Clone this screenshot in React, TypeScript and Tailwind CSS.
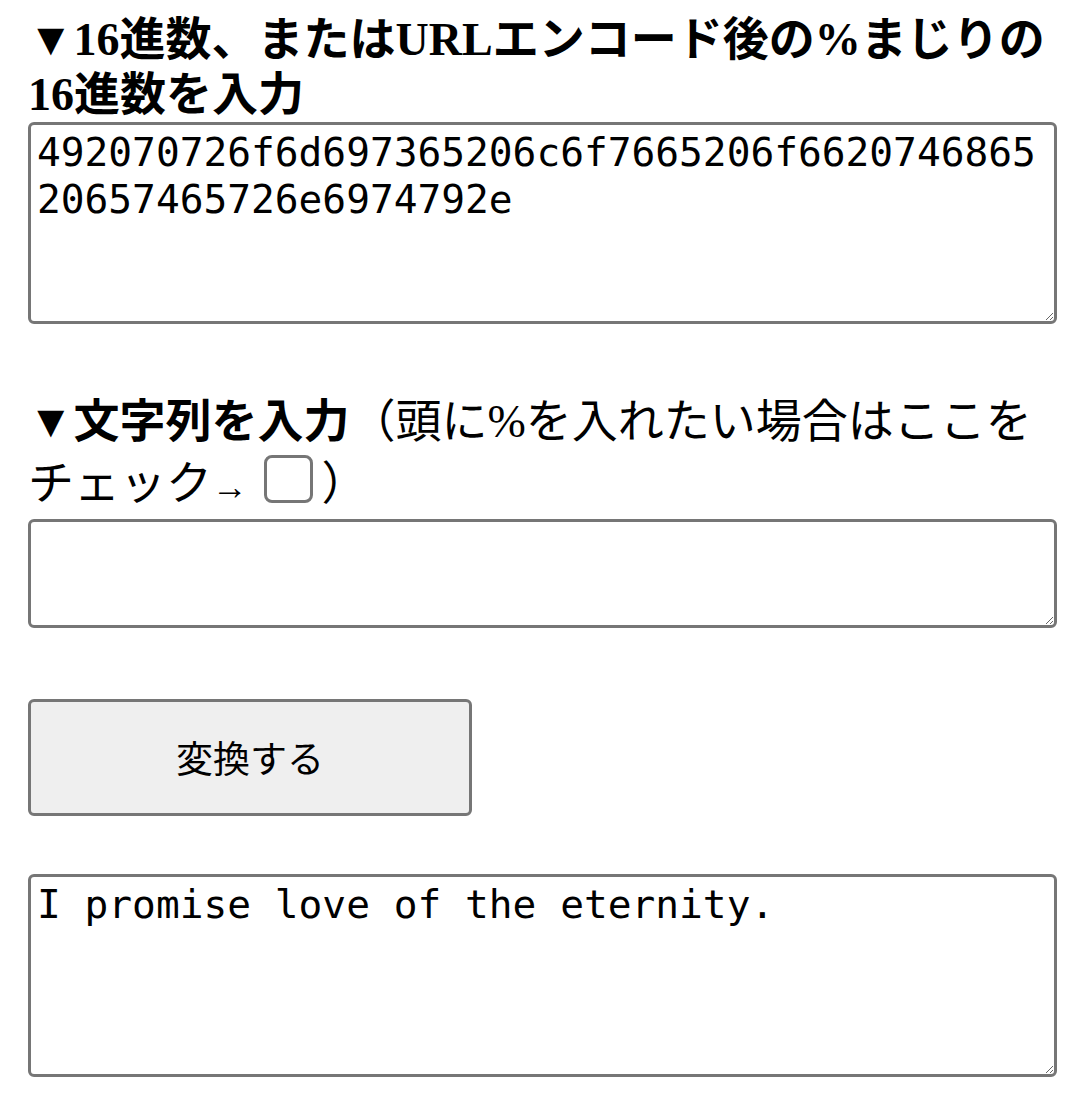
export default function App() {
  const jp = { fontFamily: '"Liberation Serif", "Noto Sans CJK JP", serif' };
  const mono = { fontFamily: '"DejaVu Sans Mono", monospace' };

  return (
    <div className="min-h-screen bg-white text-black px-[28px] pt-[12px]" style={jp}>
      <h3 className="text-[46px] leading-[55px] font-bold">
        ▼16進数、またはURLエンコード後の%まじりの16進数を入力
      </h3>
      <textarea
        className="block w-[1029px] h-[202px] border-[3px] border-[#767676] rounded-[6px] px-[6px] py-[4px] text-[39.5px] leading-[47px] text-black resize-y outline-none"
        style={mono}
        defaultValue="492070726f6d697365206c6f7665206f662074686520657465726e6974792e"
      />

      <h3 className="mt-[67px] text-[46px] leading-[62px] font-bold">
        ▼文字列を入力
        <span className="font-normal">
          （頭に%を入れたい場合はここをチェック
          <span className="text-[36px] leading-[0]">→</span>{' '}
          <input
            type="checkbox"
            className="appearance-none inline-block align-[-4px] ml-[4px] w-[49px] h-[48px] mr-[9px] border-[3px] border-[#767676] rounded-[8px] bg-white"
          />
          ）
        </span>
      </h3>
      <textarea
        className="mt-[4px] block w-[1029px] h-[109px] border-[3px] border-[#767676] rounded-[6px] px-[6px] py-[4px] text-[39.5px] leading-[47px] resize-y outline-none"
        style={mono}
      />

      <button
        className="mt-[71px] block w-[444px] h-[117px] bg-[#efefef] border-[3px] border-[#767676] rounded-[6px] text-[37px] text-black"
        style={{ fontFamily: '"Noto Sans CJK JP", sans-serif' }}
      >
        変換する
      </button>

      <textarea
        className="mt-[58px] block w-[1029px] h-[203px] border-[3px] border-[#767676] rounded-[6px] px-[6px] py-[4px] text-[39.5px] leading-[47px] resize-y outline-none"
        style={mono}
        defaultValue="I promise love of the eternity."
      />
    </div>
  );
}
